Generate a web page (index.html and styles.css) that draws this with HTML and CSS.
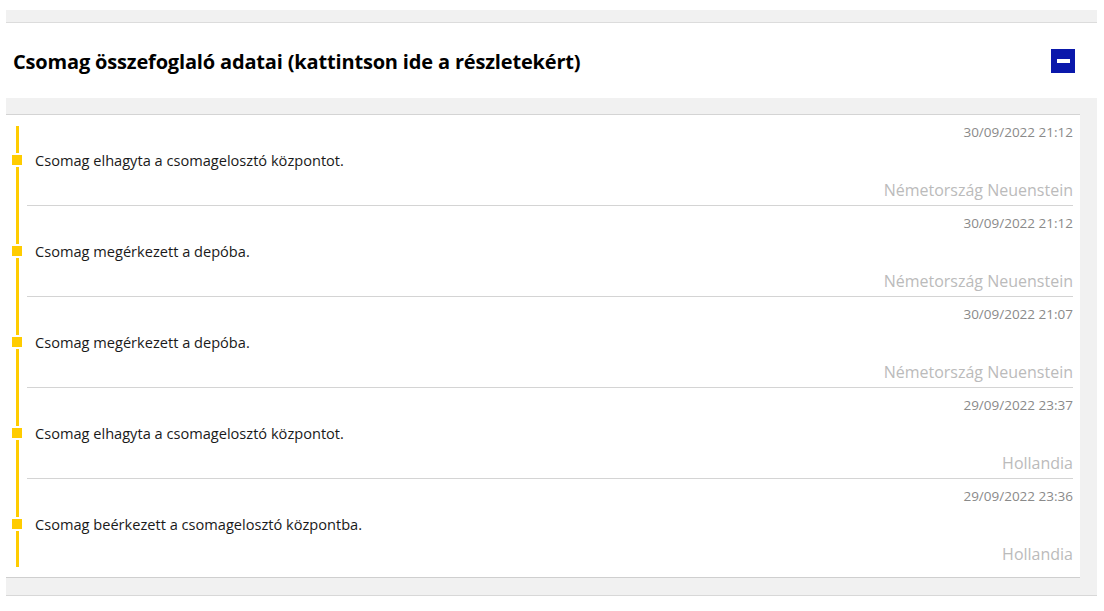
FILE: index.html
```html
<!DOCTYPE html>
<html lang="hu">
<head>
  <meta charset="UTF-8">
  <meta name="viewport" content="width=device-width, initial-scale=1.0">
  <title>Csomag követés</title>
  <link rel="stylesheet" href="styles.css">
</head>
<body>

  <div class="parcel-section">
    <div class="section-top"></div>

    <div class="section-header">
      <h2 class="section-title">Csomag összefoglaló adatai (kattintson ide a részletekért)</h2>
      <button class="toggle-btn" aria-label="Összecsukás"><span></span></button>
    </div>

    <div class="section-body">
      <div class="timeline">
        <div class="event">
          <div class="event-date">30/09/2022 21:12</div>
          <div class="event-text">Csomag elhagyta a csomagelosztó központot.</div>
          <div class="event-place">Németország Neuenstein</div>
        </div>
        <div class="event">
          <div class="event-date">30/09/2022 21:12</div>
          <div class="event-text">Csomag megérkezett a depóba.</div>
          <div class="event-place">Németország Neuenstein</div>
        </div>
        <div class="event">
          <div class="event-date">30/09/2022 21:07</div>
          <div class="event-text">Csomag megérkezett a depóba.</div>
          <div class="event-place">Németország Neuenstein</div>
        </div>
        <div class="event">
          <div class="event-date">29/09/2022 23:37</div>
          <div class="event-text">Csomag elhagyta a csomagelosztó központot.</div>
          <div class="event-place">Hollandia</div>
        </div>
        <div class="event">
          <div class="event-date">29/09/2022 23:36</div>
          <div class="event-text">Csomag beérkezett a csomagelosztó központba.</div>
          <div class="event-place">Hollandia</div>
        </div>
      </div>
    </div>
  </div>

</body>
</html>
```

FILE: styles.css
```css
body {
  margin: 0;
  padding: 0;
  background: #fff;
  font-family: "Open Sans", Lato, Arial, sans-serif;
  color: #1a1a1a;
}

.parcel-section {
  margin: 10px 7px 0 6px;
  background: #f1f1f1;
}

.section-top {
  height: 12px;
  border-bottom: 1px solid #dcdcdc;
}

.section-header {
  background: #fff;
  height: 75px;
  padding: 0 22px 0 7px;
  display: flex;
  align-items: center;
  justify-content: space-between;
}

.section-title {
  margin: 0;
  padding-top: 2px;
  font-size: 20px;
  font-weight: 700;
  color: #000;
  letter-spacing: -0.17px;
}

.toggle-btn {
  width: 24px;
  height: 24px;
  border: none;
  padding: 0;
  background: #0a18ab;
  display: flex;
  align-items: center;
  justify-content: center;
  cursor: pointer;
}

.toggle-btn span {
  width: 13px;
  height: 4px;
  background: #fff;
}

.section-body {
  padding: 16px 17px 17px 0;
  border-bottom: 1px solid #d8d8d8;
}

.timeline {
  position: relative;
  background: #fff;
  border-top: 1px solid #d4d4d4;
  border-bottom: 1px solid #cfcfcf;
  padding: 0 7px 8px 21px;
}

.timeline::before {
  content: "";
  position: absolute;
  left: 10px;
  top: 11px;
  bottom: 10px;
  width: 3px;
  background: #ffcc00;
}

.event {
  padding: 7px 0 4px;
  border-bottom: 1px solid #d4d4d4;
}

.event:last-child {
  border-bottom: none;
}

.event-date {
  text-align: right;
  font-size: 13.5px;
  line-height: 20px;
  color: #8a8a8a;
}

.event-text {
  position: relative;
  margin-top: 8px;
  padding-left: 8px;
  font-size: 14.6px;
  line-height: 20px;
  color: #1a1a1a;
}

.event-text::before {
  content: "";
  position: absolute;
  left: -15px;
  top: 5px;
  width: 10px;
  height: 10px;
  background: #ffcc00;
  box-shadow: 0 0 0 2px #fff;
}

.event-place {
  margin-top: 9px;
  text-align: right;
  font-size: 16px;
  line-height: 22px;
  color: #bbb;
}
```
